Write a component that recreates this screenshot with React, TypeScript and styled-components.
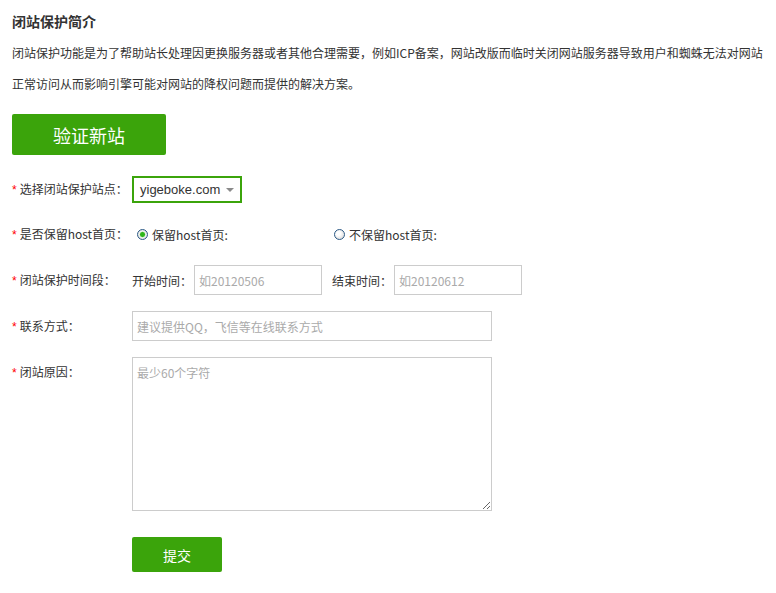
import React from "react";
import styled, { createGlobalStyle } from "styled-components";

const GREEN = "#3ba40b";

const Global = createGlobalStyle`
  html, body { margin: 0; padding: 0; background: #fff; }
  body { font-family: "Noto Sans CJK SC", "Liberation Sans", sans-serif; color: #333; }
  * { box-sizing: border-box; }
`;

const Page = styled.div`
  padding: 11px 0 0 12px;
  width: 776px;
`;

const Title = styled.h2`
  margin: 0;
  font-size: 14px;
  font-weight: bold;
  line-height: 20px;
  color: #333;
`;

const Intro = styled.p`
  margin: 6px 0 0;
  font-size: 12px;
  line-height: 31px;
  color: #333;
  white-space: nowrap;
`;

const BigButton = styled.button`
  display: block;
  margin-top: 15px;
  width: 154px;
  height: 41px;
  border: none;
  border-radius: 2px;
  background: ${GREEN};
  color: #fff;
  font-family: inherit;
  font-size: 18px;
  padding: 0;
  cursor: pointer;
`;

const Form = styled.div`
  margin-top: 21px;
  display: flex;
  flex-direction: column;
  gap: 16px;
`;

const Row = styled.div<{ $top?: boolean; $h?: number }>`
  display: flex;
  align-items: ${(p) => (p.$top ? "flex-start" : "center")};
  height: ${(p) => (p.$h ? `${p.$h}px` : "auto")};
`;

const Label = styled.div`
  width: 120px;
  flex: none;
  font-size: 12px;
  line-height: 30px;
  color: #333;
  white-space: nowrap;
`;

const Star = styled.span`
  color: #f00;
  font-family: "Liberation Sans", sans-serif;
  font-size: 12px;
  margin-right: 3px;
`;

const FakeSelect = styled.div`
  width: 110px;
  height: 27px;
  border: 2px solid ${GREEN};
  display: flex;
  align-items: center;
  justify-content: space-between;
  padding: 0 6px 0 6px;
  font-family: "Liberation Sans", sans-serif;
  font-size: 13px;
  color: #333;
`;

const Caret = styled.span`
  width: 0;
  height: 0;
  border-left: 4px solid transparent;
  border-right: 4px solid transparent;
  border-top: 4px solid #8a8a8a;
`;

const RadioGroup = styled.div`
  display: grid;
  grid-template-columns: 197px auto;
  align-items: center;
`;

const RadioOption = styled.label`
  display: flex;
  align-items: center;
  gap: 4px;
  padding-left: 5px;
  font-size: 12px;
  color: #333;
`;

const RadioDot = styled.span<{ $checked?: boolean }>`
  width: 11px;
  height: 11px;
  border-radius: 50%;
  border: 1px solid #2c5a86;
  background: ${(p) =>
    p.$checked
      ? "radial-gradient(circle at 50% 50%, #2fb51a 0 2px, #8fd980 2.6px, #f2f2f2 3.2px, #dcdcdc 5px)"
      : "radial-gradient(circle at 40% 40%, #ffffff 0 2px, #e4e4e4 5px)"};
`;

const Inline = styled.div`
  display: flex;
  align-items: center;
  height: 30px;
`;

const SubLabel = styled.span<{ $gapLeft?: number }>`
  font-size: 12px;
  color: #333;
  margin-left: ${(p) => p.$gapLeft ?? 0}px;
  margin-right: 2px;
  white-space: nowrap;
`;

const TextInput = styled.input<{ $w: number }>`
  width: ${(p) => p.$w}px;
  height: 30px;
  border: 1px solid #cccccc;
  padding: 0 4px;
  font-family: inherit;
  font-size: 12px;
  color: #333;
  outline: none;
  &::placeholder { color: #aaaaaa; }
`;

const TextArea = styled.textarea`
  display: block;
  width: 360px;
  height: 154px;
  border: 1px solid #cccccc;
  padding: 7px 4px;
  font-family: inherit;
  font-size: 12px;
  line-height: 16px;
  color: #333;
  outline: none;
  margin: 0;
  &::placeholder { color: #aaaaaa; }
`;

const SubmitRow = styled.div`
  margin-top: 26px;
  padding-left: 120px;
`;

const SubmitButton = styled.button`
  display: block;
  width: 90px;
  height: 35px;
  border: none;
  border-radius: 2px;
  background: ${GREEN};
  color: #fff;
  font-family: inherit;
  font-size: 14px;
  padding: 0;
  cursor: pointer;
`;

export default function App() {
  return (
    <Page>
      <Global />
      <Title>闭站保护简介</Title>
      <Intro>
        闭站保护功能是为了帮助站长处理因更换服务器或者其他合理需要，例如ICP备案，网站改版而临时关闭网站服务器导致用户和蜘蛛无法对网站
        <br />
        正常访问从而影响引擎可能对网站的降权问题而提供的解决方案。
      </Intro>
      <BigButton>验证新站</BigButton>
      <Form>
        <Row $h={27}>
          <Label>
            <Star>*</Star>选择闭站保护站点：
          </Label>
          <FakeSelect>
            <span>yigeboke.com</span>
            <Caret />
          </FakeSelect>
        </Row>
        <Row $h={30}>
          <Label>
            <Star>*</Star>是否保留host首页：
          </Label>
          <RadioGroup>
            <RadioOption>
              <RadioDot $checked />
              保留host首页:
            </RadioOption>
            <RadioOption>
              <RadioDot />
              不保留host首页:
            </RadioOption>
          </RadioGroup>
        </Row>
        <Row $h={30}>
          <Label>
            <Star>*</Star>闭站保护时间段：
          </Label>
          <Inline>
            <SubLabel>开始时间：</SubLabel>
            <TextInput $w={128} placeholder="如20120506" />
            <SubLabel $gapLeft={10}>结束时间：</SubLabel>
            <TextInput $w={128} placeholder="如20120612" />
          </Inline>
        </Row>
        <Row $h={30}>
          <Label>
            <Star>*</Star>联系方式：
          </Label>
          <TextInput $w={360} placeholder="建议提供QQ，飞信等在线联系方式" />
        </Row>
        <Row $top $h={154}>
          <Label>
            <Star>*</Star>闭站原因：
          </Label>
          <TextArea placeholder="最少60个字符" />
        </Row>
      </Form>
      <SubmitRow>
        <SubmitButton>提交</SubmitButton>
      </SubmitRow>
    </Page>
  );
}
